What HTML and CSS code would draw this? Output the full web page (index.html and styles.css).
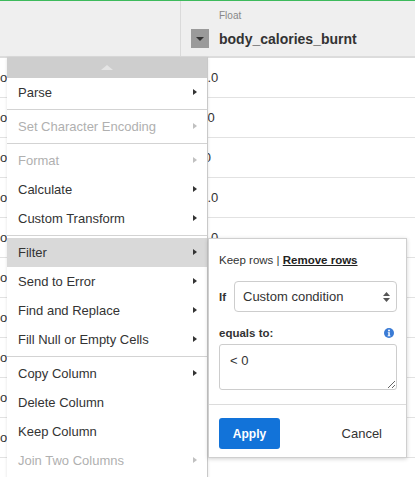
FILE: index.html
```html
<!DOCTYPE html>
<html>
<head>
<meta charset="utf-8">
<link rel="stylesheet" href="styles.css">
</head>
<body>
<div class="grid">
  <div class="head">
    <div class="hcell hcell-left"></div>
    <div class="hcell hcell-right">
      <div class="type">Float</div>
      <div class="title-row">
        <span class="col-btn"><span class="col-caret"></span></span>
        <span class="col-name">body_calories_burnt</span>
      </div>
    </div>
  </div>
  <div class="row"><div class="cell-left">o</div><div class="cell-right">63.0</div></div>
  <div class="row"><div class="cell-left">o</div><div class="cell-right">330</div></div>
  <div class="row"><div class="cell-left">o</div><div class="cell-right">7.0</div></div>
  <div class="row"><div class="cell-left">o</div><div class="cell-right">41.0</div></div>
  <div class="row"><div class="cell-left">o</div><div class="cell-right">38.0</div></div>
  <div class="row"><div class="cell-left">o</div><div class="cell-right">52.0</div></div>
  <div class="row"><div class="cell-left">o</div><div class="cell-right">44.0</div></div>
  <div class="row"><div class="cell-left">o</div><div class="cell-right">19.0</div></div>
  <div class="row"><div class="cell-left">o</div><div class="cell-right">27.0</div></div>
  <div class="row"><div class="cell-left">o</div><div class="cell-right">5.0</div></div>
</div>

<div class="menu">
  <div class="menu-scroll"><span class="scroll-up"></span></div>
  <div class="item">Parse<span class="arrow"></span></div>
  <div class="sep"></div>
  <div class="item disabled">Set Character Encoding<span class="arrow"></span></div>
  <div class="sep"></div>
  <div class="item disabled">Format<span class="arrow"></span></div>
  <div class="item">Calculate<span class="arrow"></span></div>
  <div class="item">Custom Transform<span class="arrow"></span></div>
  <div class="sep"></div>
  <div class="item active">Filter<span class="arrow"></span></div>
  <div class="item">Send to Error<span class="arrow"></span></div>
  <div class="item">Find and Replace<span class="arrow"></span></div>
  <div class="item">Fill Null or Empty Cells<span class="arrow"></span></div>
  <div class="sep"></div>
  <div class="item">Copy Column<span class="arrow"></span></div>
  <div class="item">Delete Column</div>
  <div class="item">Keep Column</div>
  <div class="item disabled">Join Two Columns<span class="arrow"></span></div>
</div>

<div class="panel">
  <div class="panel-body">
    <div class="mode">Keep rows | <a class="mode-link">Remove rows</a></div>
    <div class="if-row">
      <span class="if-label">If</span>
      <div class="select">
        <span>Custom condition</span>
        <svg class="updown" width="7" height="10" viewBox="0 0 7 10"><path d="M3.5 0 L7 4 L0 4 Z M0 6 L7 6 L3.5 10 Z" fill="#555"/></svg>
      </div>
    </div>
    <div class="eq-row">
      <span class="eq-label">equals to:</span>
      <svg class="info" width="10" height="10" viewBox="0 0 10 10"><circle cx="5" cy="5" r="5" fill="#3a7bd5"/><circle cx="5" cy="2.6" r="1" fill="#fff"/><path d="M3.8 4.2 H5.8 V7.4 H6.5 V8.3 H3.6 V7.4 H4.3 V5.1 H3.8 Z" fill="#fff"/></svg>
    </div>
    <textarea class="cond" readonly>&lt; 0</textarea>
  </div>
  <div class="panel-foot">
    <button class="apply">Apply</button>
    <button class="cancel">Cancel</button>
  </div>
</div>
</body>
</html>
```

FILE: styles.css
```css
* { box-sizing: border-box; }
html, body { margin: 0; padding: 0; }
body {
  width: 415px;
  height: 477px;
  overflow: hidden;
  position: relative;
  font-family: "Liberation Sans", Arial, sans-serif;
  color: #333;
  background: #fff;
}

.grid { width: 415px; }

.head {
  display: flex;
  height: 58px;
  background: #efefef;
  border-top: 1px solid #3dba5c;
  border-bottom: 2px solid #dcdcdc;
}
.hcell-left {
  width: 181px;
  border-right: 1px solid #dadada;
}
.hcell-right {
  flex: 1;
  padding: 9px 0 0 10px;
}
.type {
  font-size: 10px;
  line-height: 12px;
  color: #888;
  padding-left: 28px;
}
.title-row {
  display: flex;
  align-items: flex-start;
  margin-top: 7px;
  gap: 10px;
}
.col-btn {
  width: 18px;
  height: 19px;
  background: #9a9a9a;
  display: flex;
  align-items: center;
  justify-content: center;
}
.col-caret {
  width: 0;
  height: 0;
  border-left: 4px solid transparent;
  border-right: 4px solid transparent;
  border-top: 4px solid #333;
}
.col-name {
  font-size: 14px;
  font-weight: bold;
  line-height: 21px;
  color: #333;
}

.row {
  display: flex;
  height: 40px;
  border-bottom: 1px solid #e2e2e2;
  font-size: 13px;
  line-height: 39px;
  color: #333;
}
.cell-left {
  width: 181px;
  padding-left: 0;
}
.cell-right {
  flex: 1;
  padding-left: 12px;
}

/* context menu */
.menu {
  position: absolute;
  left: 7px;
  top: 57px;
  width: 201px;
  height: 440px;
  background: #fff;
  border-right: 1px solid #c9c9c9;
  box-shadow: 0 1px 3px rgba(0,0,0,0.12);
}
.menu-scroll {
  height: 21px;
  background: #cecece;
  display: flex;
  align-items: center;
  justify-content: center;
}
.scroll-up {
  width: 0;
  height: 0;
  border-left: 6px solid transparent;
  border-right: 6px solid transparent;
  border-bottom: 5px solid #e4e4e4;
}
.item {
  height: 29px;
  line-height: 29px;
  font-size: 13px;
  color: #333;
  padding-left: 11px;
  position: relative;
}
.item.disabled { color: #b0b0b0; }
.item.active { background: #d9d9d9; }
.arrow {
  position: absolute;
  right: 10px;
  top: 11px;
  width: 0;
  height: 0;
  border-top: 3.5px solid transparent;
  border-bottom: 3.5px solid transparent;
  border-left: 4px solid #333;
}
.item.disabled .arrow { border-left-color: #c0c0c0; }
.sep {
  height: 1px;
  background: #d3d3d3;
  margin: 2px 0;
}

/* filter panel */
.panel {
  position: absolute;
  left: 208px;
  top: 238px;
  width: 199px;
  background: #fff;
  border: 1px solid #cfcfcf;
  box-shadow: 0 1px 4px rgba(0,0,0,0.18);
}
.panel-body {
  padding: 14px 9px 0 10px;
}
.mode {
  font-size: 11.5px;
  line-height: 14px;
  color: #333;
}
.mode-link {
  font-weight: bold;
  text-decoration: underline;
  color: #222;
}
.if-row {
  display: flex;
  align-items: center;
  margin-top: 14px;
  gap: 8px;
}
.if-label {
  font-size: 11.5px;
  font-weight: bold;
  width: 7px;
}
.select {
  flex: 1;
  height: 31px;
  border: 1px solid #cdcdcd;
  border-radius: 4px;
  display: flex;
  align-items: center;
  justify-content: space-between;
  padding: 0 6px 0 8px;
  font-size: 13px;
  color: #333;
}
.updown { display: block; }
.eq-row {
  display: flex;
  justify-content: space-between;
  align-items: center;
  margin-top: 14px;
  height: 14px;
  padding-right: 3px;
}
.eq-label {
  font-size: 11.5px;
  font-weight: bold;
  line-height: 14px;
}
.info { display: block; }
.cond {
  display: block;
  width: 100%;
  height: 46px;
  margin: 4px 0 0 0;
  border: 1px solid #cdcdcd;
  border-radius: 3px;
  padding: 8px 10px 4px;
  font-family: "Liberation Sans", Arial, sans-serif;
  font-size: 13px;
  line-height: 15px;
  color: #333;
  outline: none;
}
.panel-foot {
  margin-top: 14px;
  border-top: 1px solid #dcdcdc;
  padding: 13px 24px 8px 10px;
  display: flex;
  justify-content: space-between;
  align-items: center;
}
.apply {
  width: 61px;
  height: 31px;
  border: none;
  border-radius: 3px;
  background: #1273d9;
  color: #fff;
  font-family: "Liberation Sans", Arial, sans-serif;
  font-weight: bold;
  font-size: 12px;
}
.cancel {
  border: none;
  background: none;
  padding: 0;
  font-family: "Liberation Sans", Arial, sans-serif;
  font-size: 13px;
  color: #333;
}
```
